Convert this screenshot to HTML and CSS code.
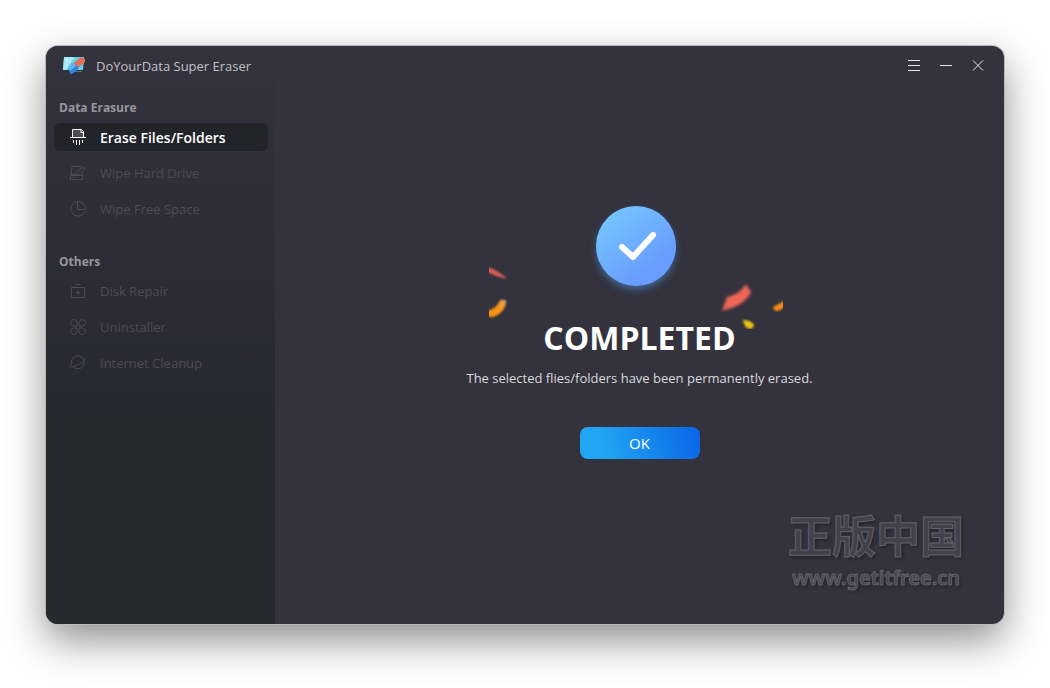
FILE: index.html
```html
<!DOCTYPE html>
<html lang="en">
<head>
    <meta charset="UTF-8">
    <meta name="viewport" content="width=device-width, initial-scale=1.0">
    <title>DoYourData Super Eraser</title>
    <link rel="stylesheet" href="styles.css">
</head>
<body>
    <div class="window">
        <aside class="sidebar">
            <div class="brand">
                <svg width="24" height="20" viewBox="0 0 24 20">
                    <path d="M2 1h20l-1 13H1z" fill="#5fd0ee"></path>
                    <path d="M2 1h10L4 14H1z" fill="#a5e9f8"></path>
                    <path d="M4 4h2M8 6h1M5 9h1M11 3h1" stroke="#fff" stroke-width="1"></path>
                    <path d="M11 15h9v1h-9z" fill="#5a6a80"></path>
                    <path d="M19 1l4 2v3l-8 7-6-4z" fill="#e0705a"></path>
                    <path d="M12 7l5 5-7 6H8l-1-5z" fill="#2e84dc"></path>
                    <path d="M12 7l2 3-6 5-1-2z" fill="#66b2f5"></path>
                </svg>
                <span>DoYourData Super Eraser</span>
            </div>

            <nav class="menu">
                <section class="group">
                    <h2 class="group-title">Data Erasure</h2>
                    <button class="item active">
                        <svg width="16" height="16" viewBox="0 0 16 16" fill="none" stroke="currentColor">
                            <path d="M2.500 8V.5h9l2 2V8" fill="#4b4a55"></path>
                            <path d="M11 1v2.500h2.500"></path>
                            <path d="M0 8.500h16M3.500 11v3M6.500 11v5M9.500 11v5M12.500 11v3"></path>
                        </svg>
                        <span>Erase Files/Folders</span>
                    </button>
                    <button class="item">
                        <svg width="16" height="16" viewBox="0 0 16 16" fill="none" stroke="currentColor">
                            <path d="M12 1.500H2L1 9.500h4M.5 10.500h12v4H.5zM12.500 10.500V8"></path>
                            <path d="M1 9.500c4 0 5-1 6-3l6-4 2.500 1-6 5.500c-2 1-5 1-8.500.5M2.500 12.500h2"></path>
                        </svg>
                        <span>Wipe Hard Drive</span>
                    </button>
                    <button class="item">
                        <svg width="16" height="16" viewBox="0 0 16 16" fill="none" stroke="currentColor">
                            <path d="M6 1A7.200 7.200 0 1 0 15 10"></path>
                            <path d="M7.500 .5v8h8A7.500 7.500 0 0 0 7.500 .5z"></path>
                        </svg>
                        <span>Wipe Free Space</span>
                    </button>
                </section>

                <section class="group">
                    <h2 class="group-title">Others</h2>
                    <button class="item">
                        <svg width="16" height="16" viewBox="0 0 16 16" fill="none" stroke="currentColor">
                            <path d="M1.500 4.500h13v10h-13zM4.500 2.500l1-1h5l1 1M8 7v5M5.500 9.500h5"></path>
                        </svg>
                        <span>Disk Repair</span>
                    </button>
                    <button class="item">
                        <svg width="16" height="16" viewBox="0 0 16 16" fill="none" stroke="currentColor">
                            <path d="M7 7H3.700A3.200 3.200 0 1 1 7 3.700z"></path>
                            <path d="M9 7h3.300A3.200 3.200 0 1 0 9 3.700z"></path>
                            <path d="M7 9H3.700A3.200 3.200 0 1 0 7 12.300z"></path>
                            <path d="M9 9h3.300A3.200 3.200 0 1 1 9 12.300z"></path>
                        </svg>
                        <span>Uninstaller</span>
                    </button>
                    <button class="item">
                        <svg width="16" height="16" viewBox="0 0 16 16" fill="none" stroke="currentColor">
                            <path d="M1.700 9A6.300 6.300 0 0 1 13.200 4M14 7A6.300 6.300 0 0 1 3.500 12.300"></path>
                            <path d="M1.700 9C-.5 11.500 0 12.500 3 11.700 7 10.500 12 8 15 5c1-1.200 0-1.500-1.800-1"></path>
                        </svg>
                        <span>Internet Cleanup</span>
                    </button>
                </section>
            </nav>
        </aside>

        <main class="content">
            <header class="titlebar">
                <button class="control" aria-label="Menu">
                    <svg width="12" height="12" viewBox="0 0 12 12" stroke="currentColor">
                        <path d="M0 .5h12M0 5.500h12M0 10.500h12"></path>
                    </svg>
                </button>
                <button class="control" aria-label="Minimize">
                    <svg width="12" height="12" viewBox="0 0 12 12" stroke="currentColor">
                        <path d="M0 5.500h12"></path>
                    </svg>
                </button>
                <button class="control" aria-label="Close">
                    <svg width="12" height="12" viewBox="0 0 12 12" stroke="currentColor">
                        <path d="M1 .5l10 10M11 .5l-10 10"></path>
                    </svg>
                </button>
            </header>

            <div class="result">
                <svg class="confetti" width="302" height="110" viewBox="0 0 302 110">
                    <defs>
                        <linearGradient id="badge" x1="0.150" y1="0.100" x2="0.700" y2="0.750">
                            <stop offset="0" stop-color="#74c5ff"></stop>
                            <stop offset="1" stop-color="#699dff"></stop>
                        </linearGradient>
                        <linearGradient id="tip" x1="0" y1="1" x2="1" y2="0">
                            <stop offset="0.500" stop-color="#ff920a"></stop>
                            <stop offset="1" stop-color="#dfa55e"></stop>
                        </linearGradient>
                        <filter id="glow" x="-30%" y="-30%" width="160%" height="160%">
                            <feGaussianBlur stdDeviation="4"></feGaussianBlur>
                        </filter>
                        <filter id="soft" x="-30%" y="-30%" width="160%" height="160%">
                            <feGaussianBlur stdDeviation="1.500"></feGaussianBlur>
                        </filter>
                        <filter id="slight" x="-30%" y="-30%" width="160%" height="160%">
                            <feGaussianBlur stdDeviation="0.800"></feGaussianBlur>
                        </filter>
                        <clipPath id="frame">
                            <rect x="0" y="-20" width="294" height="143"></rect>
                        </clipPath>
                    </defs>
                    <circle cx="147" cy="44" r="39" fill="#4a85c8" opacity="0.700" filter="url(#glow)"></circle>
                    <circle cx="147" cy="40" r="40" fill="url(#badge)"></circle>
                    <path d="M133 41l11 10 20-22" fill="none" stroke="#fff" stroke-width="6" stroke-linecap="round" stroke-linejoin="round"></path>
                    <g clip-path="url(#frame)">
                        <path d="M-2 61c7 2 13 5 20 12-8-2-14-4-20-7z" fill="#dc5f56" filter="url(#slight)"></path>
                        <path d="M-2 105c7-2 11-5 13-11h6c1 6-4 14-13 17H-2z" fill="url(#tip)" filter="url(#slight)"></path>
                        <path d="M233 105l5-14c9-2 14-6 19-13l5 8c-5 11-15 15-29 19z" fill="#ee6558" filter="url(#soft)"></path>
                        <path d="M284 101l11-6v7l-6 3c-3 0-4-1-5-4z" fill="#fa8c0c" filter="url(#slight)"></path>
                        <path d="M254 114c4 0 11 2 11 6l-3 3c-5 0-7-4-8-9z" fill="#eec30c" filter="url(#slight)"></path>
                    </g>
                </svg>
                <h1 class="result-title">COMPLETED</h1>
                <p class="result-text">The selected flies/folders have been permanently erased.</p>
                <button class="ok-btn">OK</button>
            </div>

            <div class="watermark">
                <span class="watermark-name" lang="zh-CN">正版中国</span>
                <span class="watermark-url">www.getitfree.cn</span>
            </div>
        </main>
    </div>
</body>
</html>
```
FILE: styles.css
```css
* {
    margin: 0;
    padding: 0;
    box-sizing: border-box;
}

body {
    font-family: 'Open Sans', 'Noto Sans', sans-serif;
    background: #fff;
    min-height: 100vh;
    display: flex;
    padding: 46px 46px 64px;
    overflow: hidden;
}

button {
    font-family: inherit;
    color: inherit;
    border: none;
    background: none;
    cursor: pointer;
}

.window {
    flex: 1;
    display: flex;
    border-radius: 12px;
    background: #33323d;
    overflow: hidden;
    box-shadow: 0 0 0 1px #b9bbbb, 0 16px 40px rgba(0, 0, 0, 0.45);
}

/* Sidebar */
.sidebar {
    width: 229px;
    flex-shrink: 0;
    padding: 0 7px 0 8px;
    background: linear-gradient(#33323d 0%, #282831 65%, #282830 100%);
}

.brand {
    height: 40px;
    padding-left: 8px;
    display: flex;
    align-items: center;
    gap: 10px;
    font-size: 13px;
    color: #c2c1c5;
}

.menu {
    padding-top: 12px;
    display: flex;
    flex-direction: column;
    gap: 29px;
}

.group {
    display: flex;
    flex-direction: column;
    gap: 8px;
}

.group-title {
    padding-left: 5px;
    margin-bottom: -3px;
    font-size: 12px;
    font-weight: 700;
    line-height: 20px;
    color: #97969e;
}

.item {
    height: 28px;
    padding: 0 16px;
    display: flex;
    align-items: center;
    gap: 14px;
    border-radius: 6px;
    font-size: 13px;
    color: #4c4b55;
}

.item.active {
    background: #23232a;
    color: #fff;
    font-size: 14px;
    font-weight: 600;
}

/* Main area */
.content {
    flex: 1;
    display: flex;
    flex-direction: column;
    position: relative;
}

.titlebar {
    height: 40px;
    padding-right: 20px;
    display: flex;
    align-items: center;
    justify-content: flex-end;
    gap: 20px;
    color: #e6e6e8;
}

.control {
    width: 12px;
    height: 12px;
    display: flex;
}

.result {
    flex: 1;
    padding-bottom: 46px;
    display: flex;
    flex-direction: column;
    align-items: center;
    justify-content: center;
}

.confetti {
    overflow: visible;
}

.result-title {
    font-size: 32px;
    font-weight: 700;
    line-height: 44px;
    color: #fff;
}

.result-text {
    margin: 6px 0 37px;
    font-size: 13px;
    line-height: 24px;
    color: #d9d9dc;
}

.ok-btn {
    width: 120px;
    height: 32px;
    border-radius: 8px;
    background: linear-gradient(75deg, #20a6f2 20%, #0b69e8 95%);
    color: #fff;
    font-size: 15px;
}

/* Watermark over the bottom corner */
.watermark {
    position: absolute;
    right: 40px;
    bottom: 32px;
    display: flex;
    flex-direction: column;
    align-items: center;
    color: #42414b;
    -webkit-text-stroke: 1px #62616a;
    text-shadow: 2px 2px 3px #24232c;
    pointer-events: none;
}

.watermark-name {
    font-family: 'Noto Sans CJK SC', sans-serif;
    font-size: 44px;
    font-weight: 700;
    line-height: 60px;
}

.watermark-url {
    font-family: 'Noto Sans', sans-serif;
    font-size: 20px;
    font-weight: 600;
    line-height: 28px;
}
```
